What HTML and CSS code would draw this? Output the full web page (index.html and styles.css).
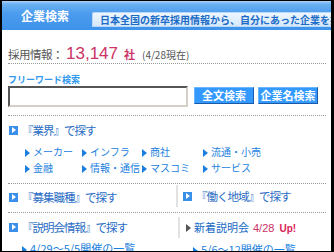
FILE: index.html
```html
<!DOCTYPE html>
<html lang="ja">
<head>
    <meta charset="UTF-8">
    <meta name="viewport" content="width=device-width, initial-scale=1.0">
    <title>企業検索</title>
    <link rel="stylesheet" href="styles.css">
</head>
<body>
    <div class="frame">
        <div class="header">
            <div class="tab">企業検索</div>
            <div class="catch">日本全国の新卒採用情報から、自分にあった企業を探す</div>
        </div>

        <div class="content">
            <div class="count"><span class="count-label">採用情報：</span><span class="count-num">13,147</span><span class="count-unit">社</span><span class="count-date">(4/28現在)</span></div>

            <div class="search">
                <p class="search-label">フリーワード検索</p>
                <div class="search-row">
                    <input type="text" class="search-input">
                    <button class="search-button">全文検索</button>
                    <button class="search-button">企業名検索</button>
                </div>
            </div>

            <div class="block">
                <h2 class="heading"><span class="icon"></span>『業界』で探す</h2>
                <ul class="links">
                    <li>メーカー</li>
                    <li>インフラ</li>
                    <li>商社</li>
                    <li>流通・小売</li>
                    <li>金融</li>
                    <li>情報・通信</li>
                    <li>マスコミ</li>
                    <li>サービス</li>
                </ul>
            </div>

            <div class="row">
                <div class="col">
                    <h2 class="heading"><span class="icon"></span>『募集職種』で探す</h2>
                </div>
                <div class="col-right">
                    <div class="divided">
                        <h2 class="heading"><span class="icon"></span>『働く地域』で探す</h2>
                    </div>
                </div>
            </div>

            <div class="row row-last">
                <div class="col">
                    <h2 class="heading"><span class="icon"></span>『説明会情報』で探す</h2>
                    <p class="sub-link">4/29〜5/5開催の一覧</p>
                </div>
                <div class="col-right">
                    <div class="divided divided-news">
                        <p class="news"><span class="news-arrow"></span>新着説明会<span class="news-date">4/28</span><span class="news-up">Up!</span></p>
                    </div>
                    <p class="sub-link sub-link-right">5/6〜12開催の一覧</p>
                </div>
            </div>
        </div>
    </div>
</body>
</html>
```

FILE: styles.css
```css
* {
    margin: 0;
    padding: 0;
    box-sizing: border-box;
}
body {
    background: #000;
    font-family: "Noto Sans CJK JP", sans-serif;
    padding: 1px 3px 1px 2px;
}
.frame {
    background: #fff;
    height: 250px;
    overflow: hidden;
}
.header {
    display: flex;
    align-items: flex-end;
    height: 29px;
    background: linear-gradient(#a9d3f8 0, #6db2f2 3px, #4c9cee 12px, #3d92ea 100%);
    padding-bottom: 3px;
}
.tab {
    width: 86px;
    align-self: stretch;
    display: flex;
    align-items: center;
    justify-content: center;
    color: #fff;
    font-weight: bold;
    font-size: 12px;
    padding-top: 3px;
}
.catch {
    flex: 1;
    height: 15px;
    margin-left: 4px;
    background: linear-gradient(#eef6fe, #d4e8fb);
    border: 1px solid #b7d8f8;
    border-right: none;
    border-radius: 2px 0 0 0;
    color: #1c6cc6;
    font-size: 10px;
    font-weight: bold;
    line-height: 13px;
    padding-left: 7px;
    white-space: nowrap;
    overflow: hidden;
}
.content {
    padding: 0 5px 0 6px;
}
.count {
    padding-top: 10px;
    height: 33px;
    white-space: nowrap;
    color: #555;
}
.count-label {
    font-size: 11.5px;
    letter-spacing: -0.5px;
}
.count-num {
    font-family: "Liberation Sans", sans-serif;
    font-size: 17px;
    color: #cc3366;
    margin-left: 3px;
}
.count-unit {
    font-size: 11px;
    font-weight: bold;
    color: #cc3366;
    margin-left: 6px;
}
.count-date {
    font-size: 10px;
    margin-left: 7px;
}
.search {
    border-top: 1px dotted #999;
    border-bottom: 1px dotted #999;
    padding: 10px 0 8px;
}
.search-label {
    color: #3399ee;
    font-size: 9px;
    font-weight: bold;
    line-height: 11px;
}
.search-row {
    display: flex;
    align-items: flex-start;
    gap: 4px;
    margin-top: 1px;
}
.search-input {
    width: 180px;
    height: 21px;
    border: 2px solid;
    border-color: #555 #d4d0c8 #d4d0c8 #555;
    margin-right: 2px;
}
.search-button {
    height: 17px;
    width: 60px;
    margin-top: 1px;
    background: #3399ff;
    color: #fff;
    font-family: "Noto Sans CJK JP", sans-serif;
    font-size: 11px;
    font-weight: bold;
    line-height: 13px;
    border: 1px solid;
    border-color: #6bb5ff #1a5aa8 #1a5aa8 #6bb5ff;
}
.block {
    padding: 5px 0 7px;
    border-bottom: 1px dotted #999;
}
.heading {
    display: flex;
    align-items: center;
    font-size: 11.5px;
    letter-spacing: -1px;
    font-weight: normal;
    color: #2a6cc4;
    line-height: 18px;
    white-space: nowrap;
}
.icon {
    flex: none;
    width: 9px;
    height: 9px;
    background: #3a8fe8;
    margin: 0 4px 0 1px;
    position: relative;
}
.icon::after {
    content: "";
    position: absolute;
    left: 3px;
    top: 1px;
    border-left: 4px solid #fff;
    border-top: 3.5px solid transparent;
    border-bottom: 3.5px solid transparent;
}
.links {
    list-style: none;
    display: grid;
    grid-template-columns: 57px 60px 61px 1fr;
    padding: 5px 0 0 17px;
    font-size: 10px;
    line-height: 16px;
    color: #1a7fe0;
    white-space: nowrap;
}
.links li::before,
.sub-link::before {
    content: "";
    display: inline-block;
    border-left: 5px solid #1a7fe0;
    border-top: 4px solid transparent;
    border-bottom: 4px solid transparent;
    margin-right: 3px;
    vertical-align: -1px;
}
.row {
    display: flex;
    align-items: flex-start;
    height: 29px;
    border-bottom: 1px dotted #999;
}
.row-last {
    height: auto;
    border-bottom: none;
}
.col {
    flex: 0 0 168px;
    padding-top: 4px;
}
.row-last .col {
    padding-top: 5px;
}
.col-right {
    flex: 1;
}
.divided {
    border-left: 2px solid #e2e2e2;
    margin-top: 1px;
    height: 22px;
    padding: 2px 0 0 4px;
}
.divided-news {
    margin: 4px 0 0 2px;
    height: 21px;
    padding: 1px 0 0 6px;
}
.news {
    font-size: 11px;
    color: #1a6cc6;
    line-height: 18px;
    white-space: nowrap;
}
.news-arrow {
    display: inline-block;
    border-left: 5px solid #555;
    border-top: 4px solid transparent;
    border-bottom: 4px solid transparent;
    margin-right: 3px;
}
.news-date {
    color: #cc3366;
    font-family: "Liberation Sans", sans-serif;
    margin-left: 4px;
}
.news-up {
    color: #dd2255;
    font-family: "Liberation Sans", sans-serif;
    font-weight: bold;
    font-size: 10px;
    margin-left: 5px;
}
.sub-link {
    font-size: 11px;
    color: #1a7fe0;
    line-height: 16px;
    padding: 4px 0 0 14px;
    white-space: nowrap;
}
.sub-link-right {
    padding: 3px 0 0 17px;
}
```
